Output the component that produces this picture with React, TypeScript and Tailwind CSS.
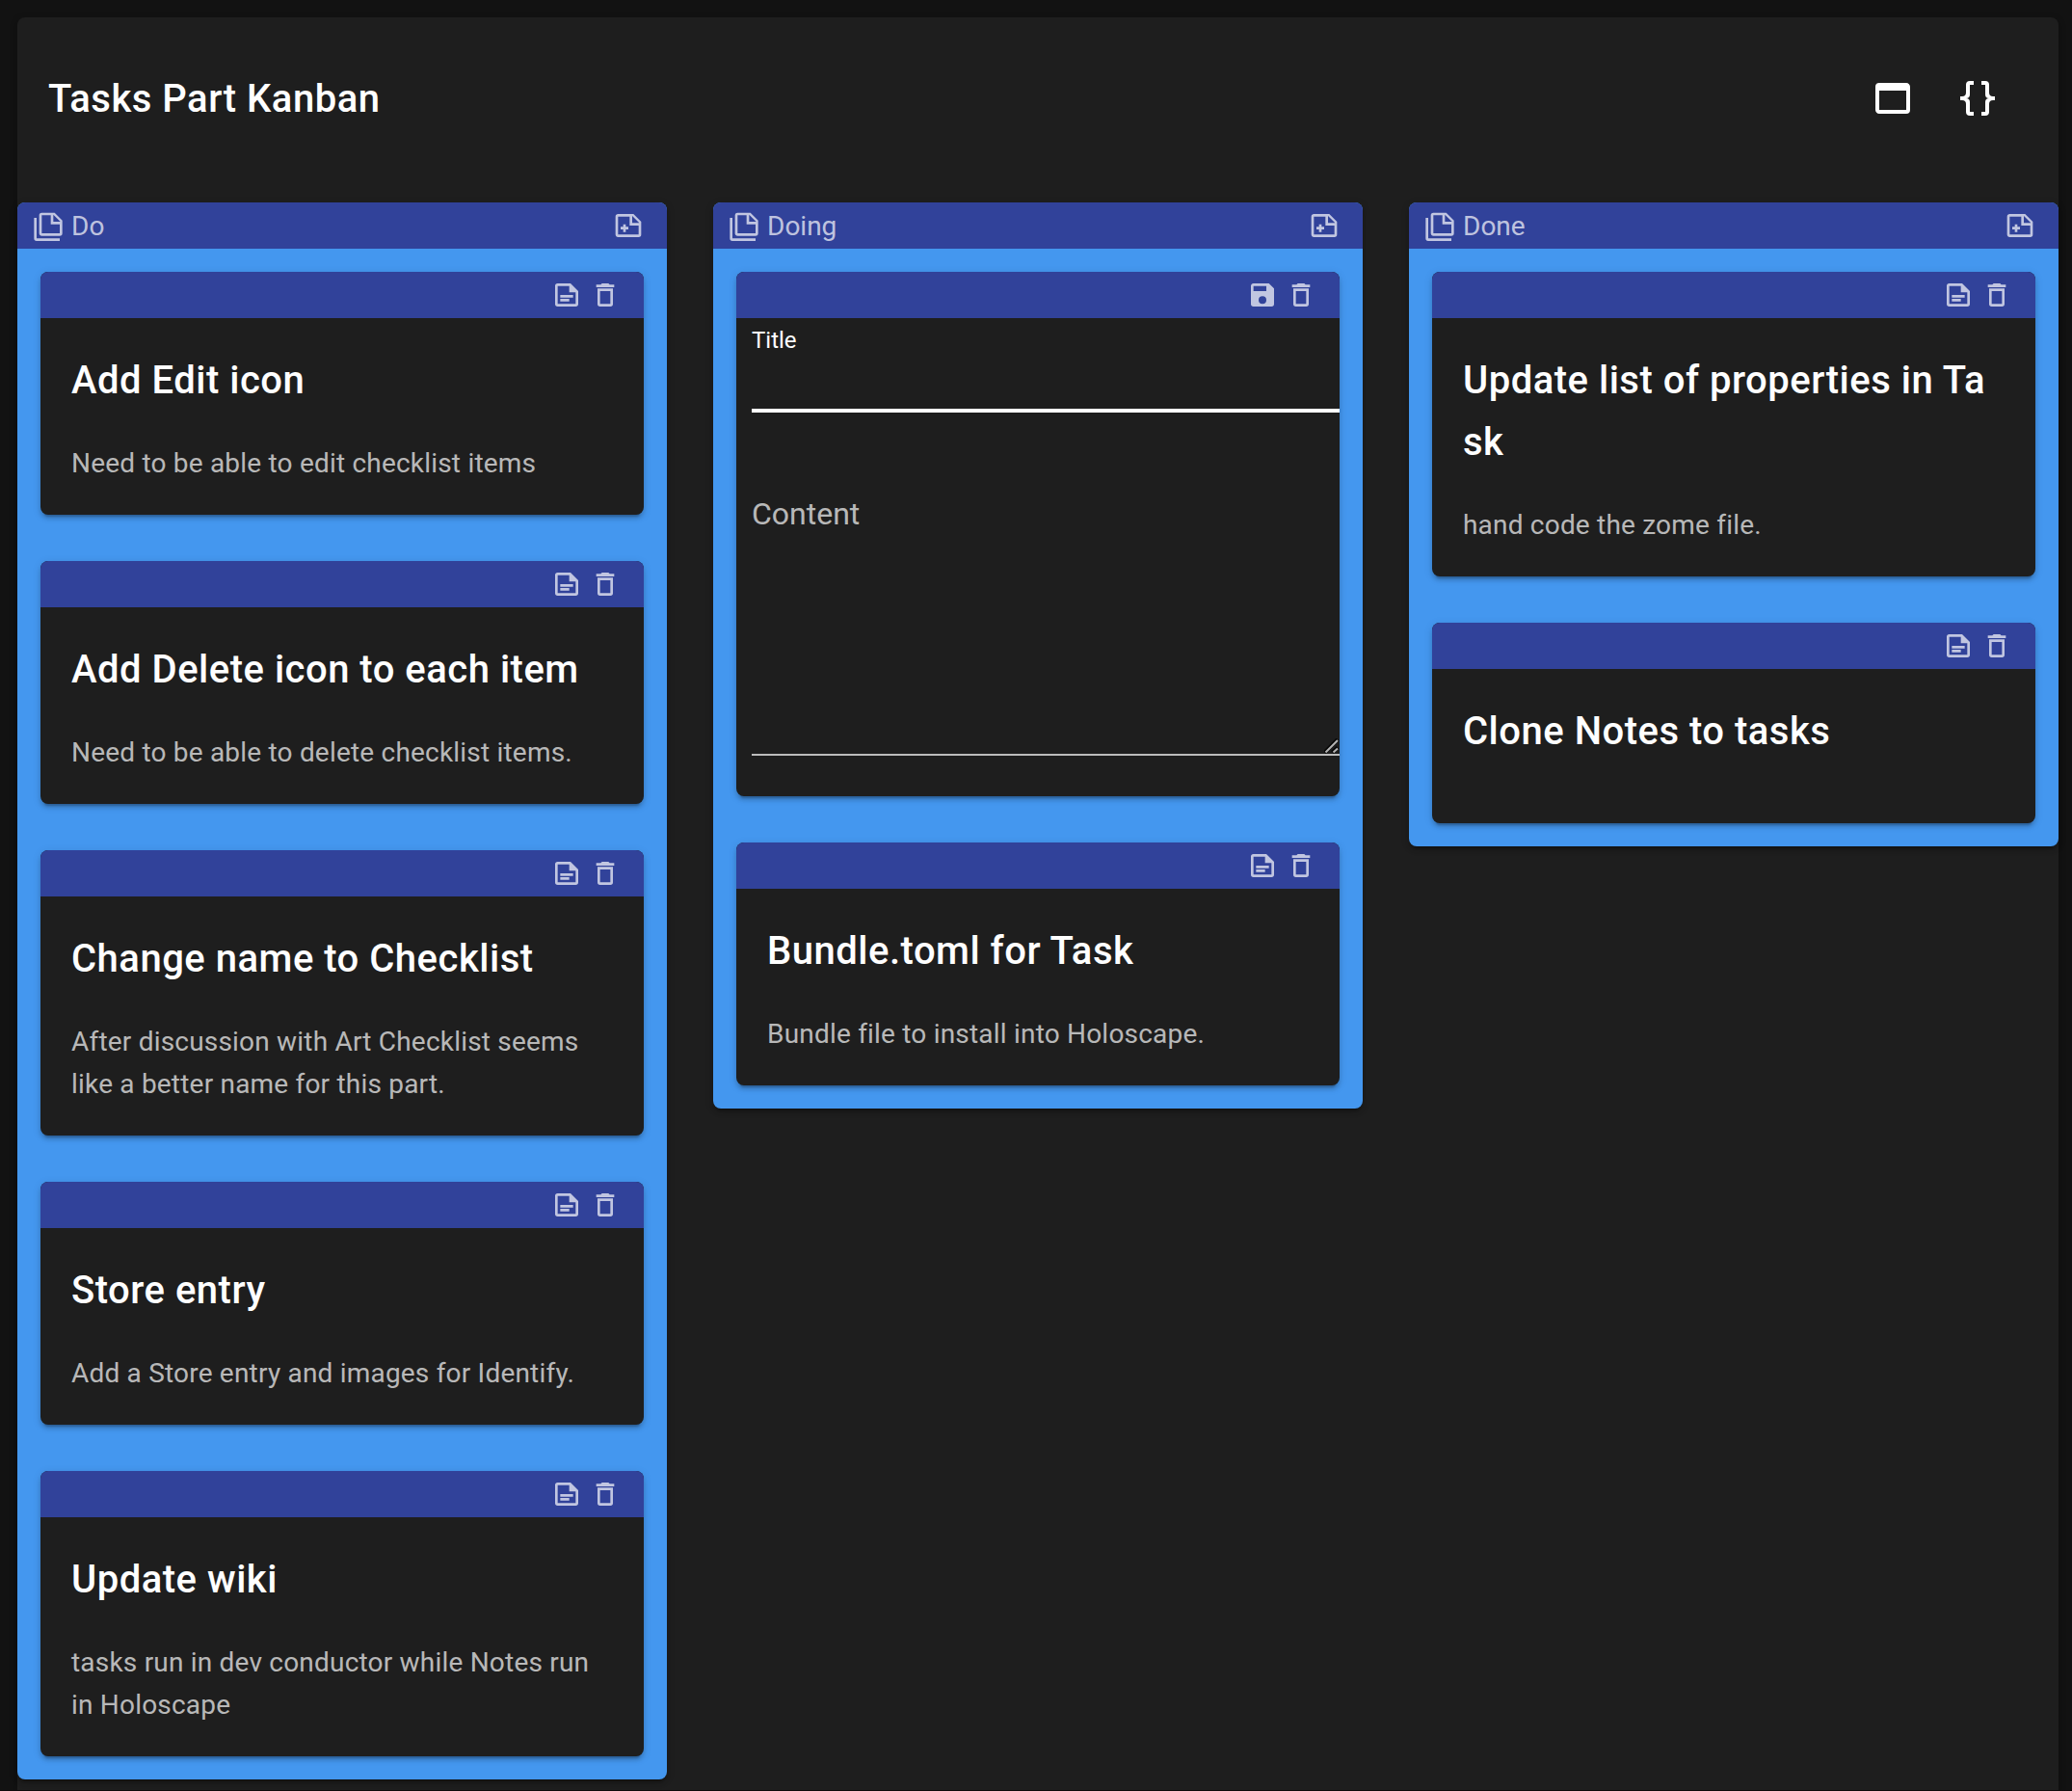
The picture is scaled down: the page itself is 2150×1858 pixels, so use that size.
import type { ReactNode } from "react";

const ICONS = {
  noteMultiple:
    "M3,6V22H21V24H3A2,2 0 0,1 1,22V6H3M16,9H21.5L16,3.5V9M7,2H17L23,8V18A2,2 0 0,1 21,20H7C5.89,20 5,19.1 5,18V4A2,2 0 0,1 7,2M7,4V18H21V11H14V4H7Z",
  notePlus:
    "M15,10H20.5L15,4.5V10M4,3H16L22,9V19A2,2 0 0,1 20,21H4C2.89,21 2,20.1 2,19V5C2,3.89 2.89,3 4,3M4,5V19H20V12H13V5H4M8,17V15H6V13H8V11H10V13H12V15H10V17H8Z",
  noteText:
    "M15,3H5A2,2 0 0,0 3,5V19A2,2 0 0,0 5,21H19A2,2 0 0,0 21,19V9L15,3M19,19H5V5H14V10H19V19M17,14H7V12H17V14M14,17H7V15H14V17Z",
  trash:
    "M6,19A2,2 0 0,0 8,21H16A2,2 0 0,0 18,19V7H6V19M8,9H16V19H8V9M15.5,4L14.5,3H9.5L8.5,4H5V6H19V4H15.5Z",
  save: "M15,9H5V5H15M12,19A3,3 0 0,1 9,16A3,3 0 0,1 12,13A3,3 0 0,1 15,16A3,3 0 0,1 12,19M17,3H5C3.89,3 3,3.9 3,5V19A2,2 0 0,0 5,21H19A2,2 0 0,0 21,19V7L17,3Z",
  window:
    "M19,4C20.11,4 21,4.9 21,6V18A2,2 0 0,1 19,20H5C3.89,20 3,19.1 3,18V6A2,2 0 0,1 5,4H19M19,18V8H5V18H19Z",
  braces:
    "M8,3A2,2 0 0,0 6,5V9A2,2 0 0,1 4,11H3V13H4A2,2 0 0,1 6,15V19A2,2 0 0,0 8,21H10V19H8V14A2,2 0 0,0 6,12A2,2 0 0,0 8,10V5H10V3M16,3A2,2 0 0,1 18,5V9A2,2 0 0,0 20,11H21V13H20A2,2 0 0,0 18,15V19A2,2 0 0,1 16,21H14V19H16V14A2,2 0 0,1 18,12A2,2 0 0,1 16,10V5H14V3H16Z",
};

function Icon({ name, className = "size-8" }: { name: keyof typeof ICONS; className?: string }) {
  return (
    <svg viewBox="0 0 24 24" fill="currentColor" className={`block shrink-0 ${className}`}>
      <path d={ICONS[name]} />
    </svg>
  );
}

const SHADOW =
  "shadow-[0_6px_2px_-4px_rgba(0,0,0,0.2),0_4px_4px_0_rgba(0,0,0,0.14),0_2px_10px_0_rgba(0,0,0,0.12)]";

function Card({ editing = false, children }: { editing?: boolean; children: ReactNode }) {
  return (
    <article className={`overflow-hidden rounded-lg bg-[#1e1e1e] ${SHADOW}`}>
      <div className="flex h-12 items-center justify-end gap-2 bg-[#31429a] pr-6 text-white/70">
        <Icon name={editing ? "save" : "noteText"} />
        <Icon name="trash" />
      </div>
      {children}
    </article>
  );
}

function Task({ title, text }: { title: string; text?: string }) {
  return (
    <Card>
      <h2 className="px-8 pt-[33px] pb-8 text-[40px] leading-16 font-medium tracking-[0.5px] break-all text-white">
        {title}
      </h2>
      <p className="px-8 pb-[31px] text-[28px] leading-11 tracking-[0.2px] text-white/70">{text}</p>
    </Card>
  );
}

function EditTask() {
  return (
    <Card editing>
      <div className="h-[496px] pl-4">
        <div className="flex h-[98px] flex-col justify-between border-b-4 border-white pt-[7px]">
          <label className="text-[24px] leading-8 text-white">Title</label>
        </div>
        <div className="relative mt-[72px] h-[284px] border-b-2 border-white/70 pt-[13px]">
          <label className="block text-[32px] leading-10 text-white/70">Content</label>
          <svg viewBox="0 0 16 16" className="absolute right-0 bottom-0 size-4" fill="none">
            <path d="M0.5 14.5L14 1M8.5 14.5L14 9.5" stroke="#000" strokeOpacity="0.75" strokeWidth="4" />
            <path d="M1.5 14.5L14 2M9.5 14.5L14 10.5" stroke="#b4b4b4" strokeWidth="2" />
          </svg>
        </div>
      </div>
    </Card>
  );
}

function Column({ name, children }: { name: string; children: ReactNode }) {
  return (
    <section className={`overflow-hidden rounded-lg bg-[#4497ef] ${SHADOW}`}>
      <header className="flex h-12 items-center bg-[#31429a] pr-6 pl-4 text-white/70">
        <Icon name="noteMultiple" />
        <span className="ml-2 grow pt-0.5 text-[28px] leading-8">{name}</span>
        <Icon name="notePlus" />
      </header>
      <div className="flex flex-col gap-12 p-6">{children}</div>
    </section>
  );
}

export default function App() {
  return (
    <div className="h-[1858px] w-[2150px] overflow-hidden border-b border-[#0e0a0b] bg-[#121212] pt-[18px] pr-[14px] pl-[18px] font-['Roboto',sans-serif]">
      <main className={`h-[1900px] rounded-lg bg-[#1e1e1e] ${SHADOW}`}>
        <header className="flex h-[168px] items-center justify-between pr-[60px] pl-8 text-white">
          <h1 className="pt-0.5 text-[40px] leading-16 font-medium tracking-[0.5px]">Tasks Part Kanban</h1>
          <div className="flex gap-10">
            <Icon name="window" className="size-12" />
            <Icon name="braces" className="size-12" />
          </div>
        </header>
        <div className="mt-6 grid grid-cols-3 items-start gap-12">
          <Column name="Do">
            <Task title="Add Edit icon" text="Need to be able to edit checklist items" />
            <Task title="Add Delete icon to each item" text="Need to be able to delete checklist items." />
            <Task
              title="Change name to Checklist"
              text="After discussion with Art Checklist seems like a better name for this part."
            />
            <Task title="Store entry" text="Add a Store entry and images for Identify." />
            <Task title="Update wiki" text="tasks run in dev conductor while Notes run in Holoscape" />
          </Column>
          <Column name="Doing">
            <EditTask />
            <Task title="Bundle.toml for Task" text="Bundle file to install into Holoscape." />
          </Column>
          <Column name="Done">
            <Task title="Update list of properties in Task" text="hand code the zome file." />
            <Task title="Clone Notes to tasks" />
          </Column>
        </div>
      </main>
    </div>
  );
}
